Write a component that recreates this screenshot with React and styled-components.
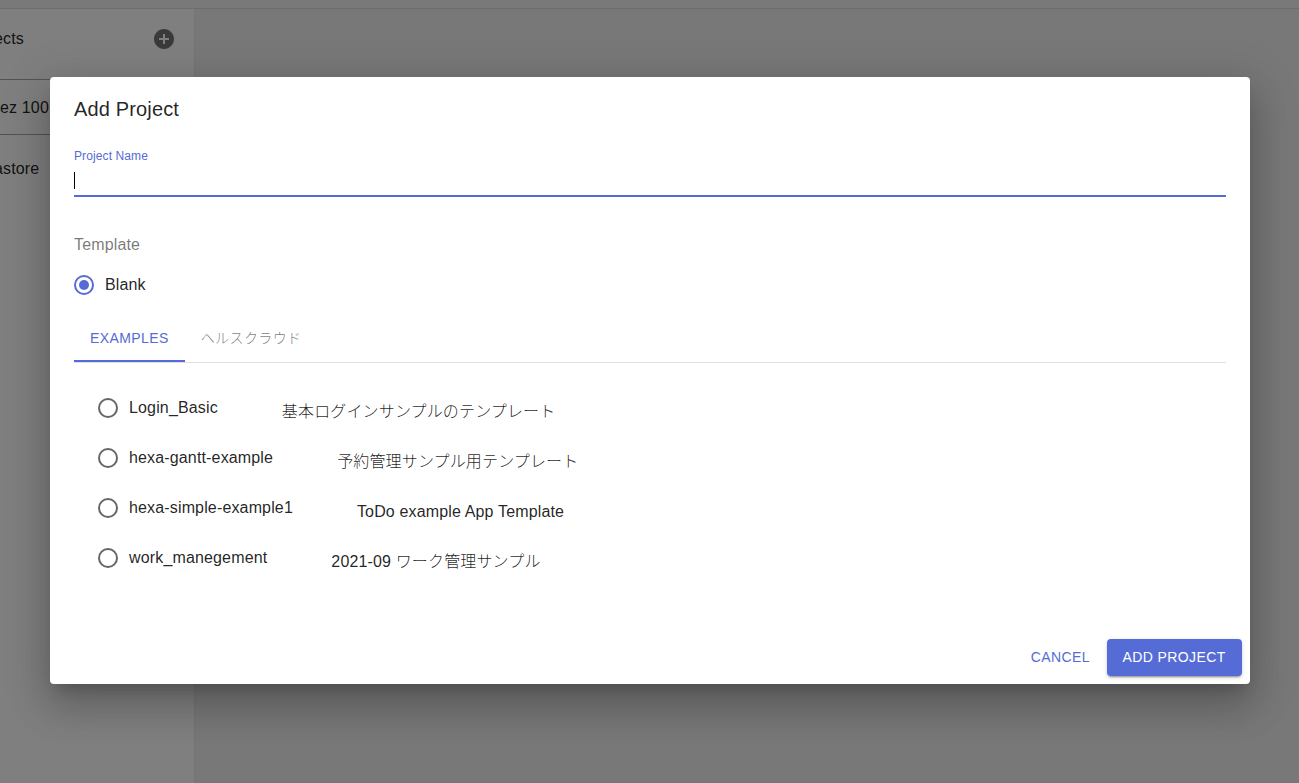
import React from 'react';
import styled, { createGlobalStyle, css } from 'styled-components';

const PRIMARY = '#556cd6';

const GlobalStyle = createGlobalStyle`
  *, *::before, *::after { box-sizing: border-box; }
  body {
    margin: 0;
    font-family: "Liberation Sans", "Noto Sans CJK JP", sans-serif;
    font-size: 16px;
    line-height: 24px;
    letter-spacing: 0.15px;
    color: rgba(0, 0, 0, 0.87);
  }
`;

const Page = styled.div`
  position: relative;
  display: flex;
  flex-direction: column;
  width: 100%;
  height: 100vh;
  overflow: hidden;
  background: #f0f0f0;
`;

const TopBar = styled.header`
  flex: none;
  height: 9px;
  background: #f2f2f2;
  border-bottom: 1px solid #dadada;
`;

const Sidebar = styled.aside`
  flex: 1;
  width: 195px;
  background: #fff;
  border-right: 1px solid #e8e8e8;
`;

const SidebarRow = styled.div`
  display: flex;
  align-items: center;
  justify-content: space-between;
  height: ${(p) => p.$height}px;
  padding: ${(p) => p.$drop || 0}px 18px ${(p) => p.$lift || 0}px 0;
  ${(p) => p.$divided && css`border-bottom: 1px solid #a6a6a6;`}
`;

const SidebarLabel = styled.span`
  margin-left: ${(p) => p.$shift}px;
  white-space: nowrap;
`;

const Backdrop = styled.div`
  position: absolute;
  inset: 0;
  padding: 77px 49px 0 50px;
  background: rgba(0, 0, 0, 0.5);
`;

const Dialog = styled.section`
  display: flex;
  flex-direction: column;
  height: 607px;
  background: #fff;
  border-radius: 4px;
  box-shadow: 0 11px 15px -7px rgba(0, 0, 0, 0.2), 0 24px 38px 3px rgba(0, 0, 0, 0.14),
    0 9px 46px 8px rgba(0, 0, 0, 0.12);
`;

const Title = styled.h2`
  margin: 0;
  padding: 16px 24px;
  font-size: 20px;
  font-weight: 400;
  line-height: 32px;
`;

const Content = styled.div`
  flex: 1;
  padding: 8px 24px 0;
`;

const Field = styled.label`
  display: block;
  height: 48px;
  border-bottom: 2px solid ${PRIMARY};
`;

const FieldLabel = styled.span`
  display: block;
  font-size: 12px;
  line-height: 14px;
  letter-spacing: 0.11px;
  color: ${PRIMARY};
`;

const Caret = styled.span`
  display: block;
  width: 1px;
  height: 17px;
  margin-top: 9px;
  background: #000;
`;

const GroupLabel = styled.div`
  margin-top: 36px;
  color: rgba(0, 0, 0, 0.54);
`;

const Option = styled.label`
  display: flex;
  align-items: center;
  height: 50px;
  margin-left: -2px;
`;

const BlankOption = styled(Option)`
  height: 42px;
  margin-top: 7px;
  margin-bottom: 8px;
`;

const RadioIcon = styled.svg`
  flex: none;
  width: 24px;
  height: 24px;
  margin-right: 9px;
  color: ${(p) => (p.$checked ? PRIMARY : 'rgba(0, 0, 0, 0.6)')};
`;

const OptionName = styled.span`
  margin-top: -1px;
  white-space: nowrap;
`;

const Description = styled.span`
  margin: 8px 0 0 64px;
  white-space: nowrap;
  font-weight: 300;
`;

const Tabs = styled.nav`
  display: flex;
  height: 49px;
  border-bottom: 1px solid #e0e0e0;
`;

const Tab = styled.div`
  display: flex;
  align-items: center;
  justify-content: center;
  height: 48px;
  padding: 2px 16px 0;
  font-size: 14px;
  font-weight: 300;
  letter-spacing: 0.4px;
  color: ${(p) => (p.$active ? PRIMARY : 'rgba(0, 0, 0, 0.54)')};
  border-bottom: 2px solid ${(p) => (p.$active ? PRIMARY : 'transparent')};
`;

const OptionList = styled.div`
  padding: 20px 24px 0;
`;

const Actions = styled.footer`
  display: flex;
  justify-content: flex-end;
  gap: 8px;
  padding: 8px;
`;

const Button = styled.button`
  height: 37px;
  padding: 0 9px 2px 8px;
  border: 0;
  border-radius: 4px;
  font: 400 14px/24px "Liberation Sans", sans-serif;
  letter-spacing: 0.4px;
  color: ${PRIMARY};
  background: transparent;
  ${(p) =>
    p.$contained &&
    css`
      width: 135px;
      padding: 0 1px 2px 0;
      color: #fff;
      background: ${PRIMARY};
      box-shadow: 0 3px 1px -2px rgba(0, 0, 0, 0.2), 0 2px 2px 0 rgba(0, 0, 0, 0.14),
        0 1px 5px 0 rgba(0, 0, 0, 0.12);
    `}
`;

const templates = [
  ['Login_Basic', '基本ログインサンプルのテンプレート'],
  ['hexa-gantt-example', '予約管理サンプル用テンプレート'],
  ['hexa-simple-example1', 'ToDo example App Template'],
  ['work_manegement', '2021-09 ワーク管理サンプル'],
];

function Radio({ checked = false }) {
  return (
    <RadioIcon viewBox="0 0 24 24" $checked={checked}>
      <circle cx="12" cy="12" r="9" fill="none" stroke="currentColor" strokeWidth="2" />
      {checked && <circle cx="12" cy="12" r="5" fill="currentColor" />}
    </RadioIcon>
  );
}

function AddCircle() {
  return (
    <svg width="24" height="24" viewBox="0 0 24 24" fill="rgba(0,0,0,0.54)">
      <path d="M12 2C6.48 2 2 6.48 2 12s4.48 10 10 10 10-4.48 10-10S17.52 2 12 2zm5 11h-4v4h-2v-4H7v-2h4V7h2v4h4v2z" />
    </svg>
  );
}

export default function App() {
  return (
    <Page>
      <GlobalStyle />
      <TopBar />
      <Sidebar>
        <SidebarRow $height={71} $lift={10} $divided>
          <SidebarLabel $shift={-6}>ects</SidebarLabel>
          <AddCircle />
        </SidebarRow>
        <SidebarRow $height={55} $drop={2} $divided>
          <SidebarLabel $shift={0}>ez 100</SidebarLabel>
        </SidebarRow>
        <SidebarRow $height={67}>
          <SidebarLabel $shift={-6}>astore</SidebarLabel>
        </SidebarRow>
      </Sidebar>
      <Backdrop>
        <Dialog>
          <Title>Add Project</Title>
          <Content>
            <Field>
              <FieldLabel>Project Name</FieldLabel>
              <Caret />
            </Field>
            <GroupLabel>Template</GroupLabel>
            <BlankOption>
              <Radio checked />
              <OptionName>Blank</OptionName>
            </BlankOption>
            <Tabs>
              <Tab $active>EXAMPLES</Tab>
              <Tab>ヘルスクラウド</Tab>
            </Tabs>
            <OptionList>
              {templates.map(([name, description]) => (
                <Option key={name}>
                  <Radio />
                  <OptionName>{name}</OptionName>
                  <Description>{description}</Description>
                </Option>
              ))}
            </OptionList>
          </Content>
          <Actions>
            <Button>CANCEL</Button>
            <Button $contained>ADD PROJECT</Button>
          </Actions>
        </Dialog>
      </Backdrop>
    </Page>
  );
}
